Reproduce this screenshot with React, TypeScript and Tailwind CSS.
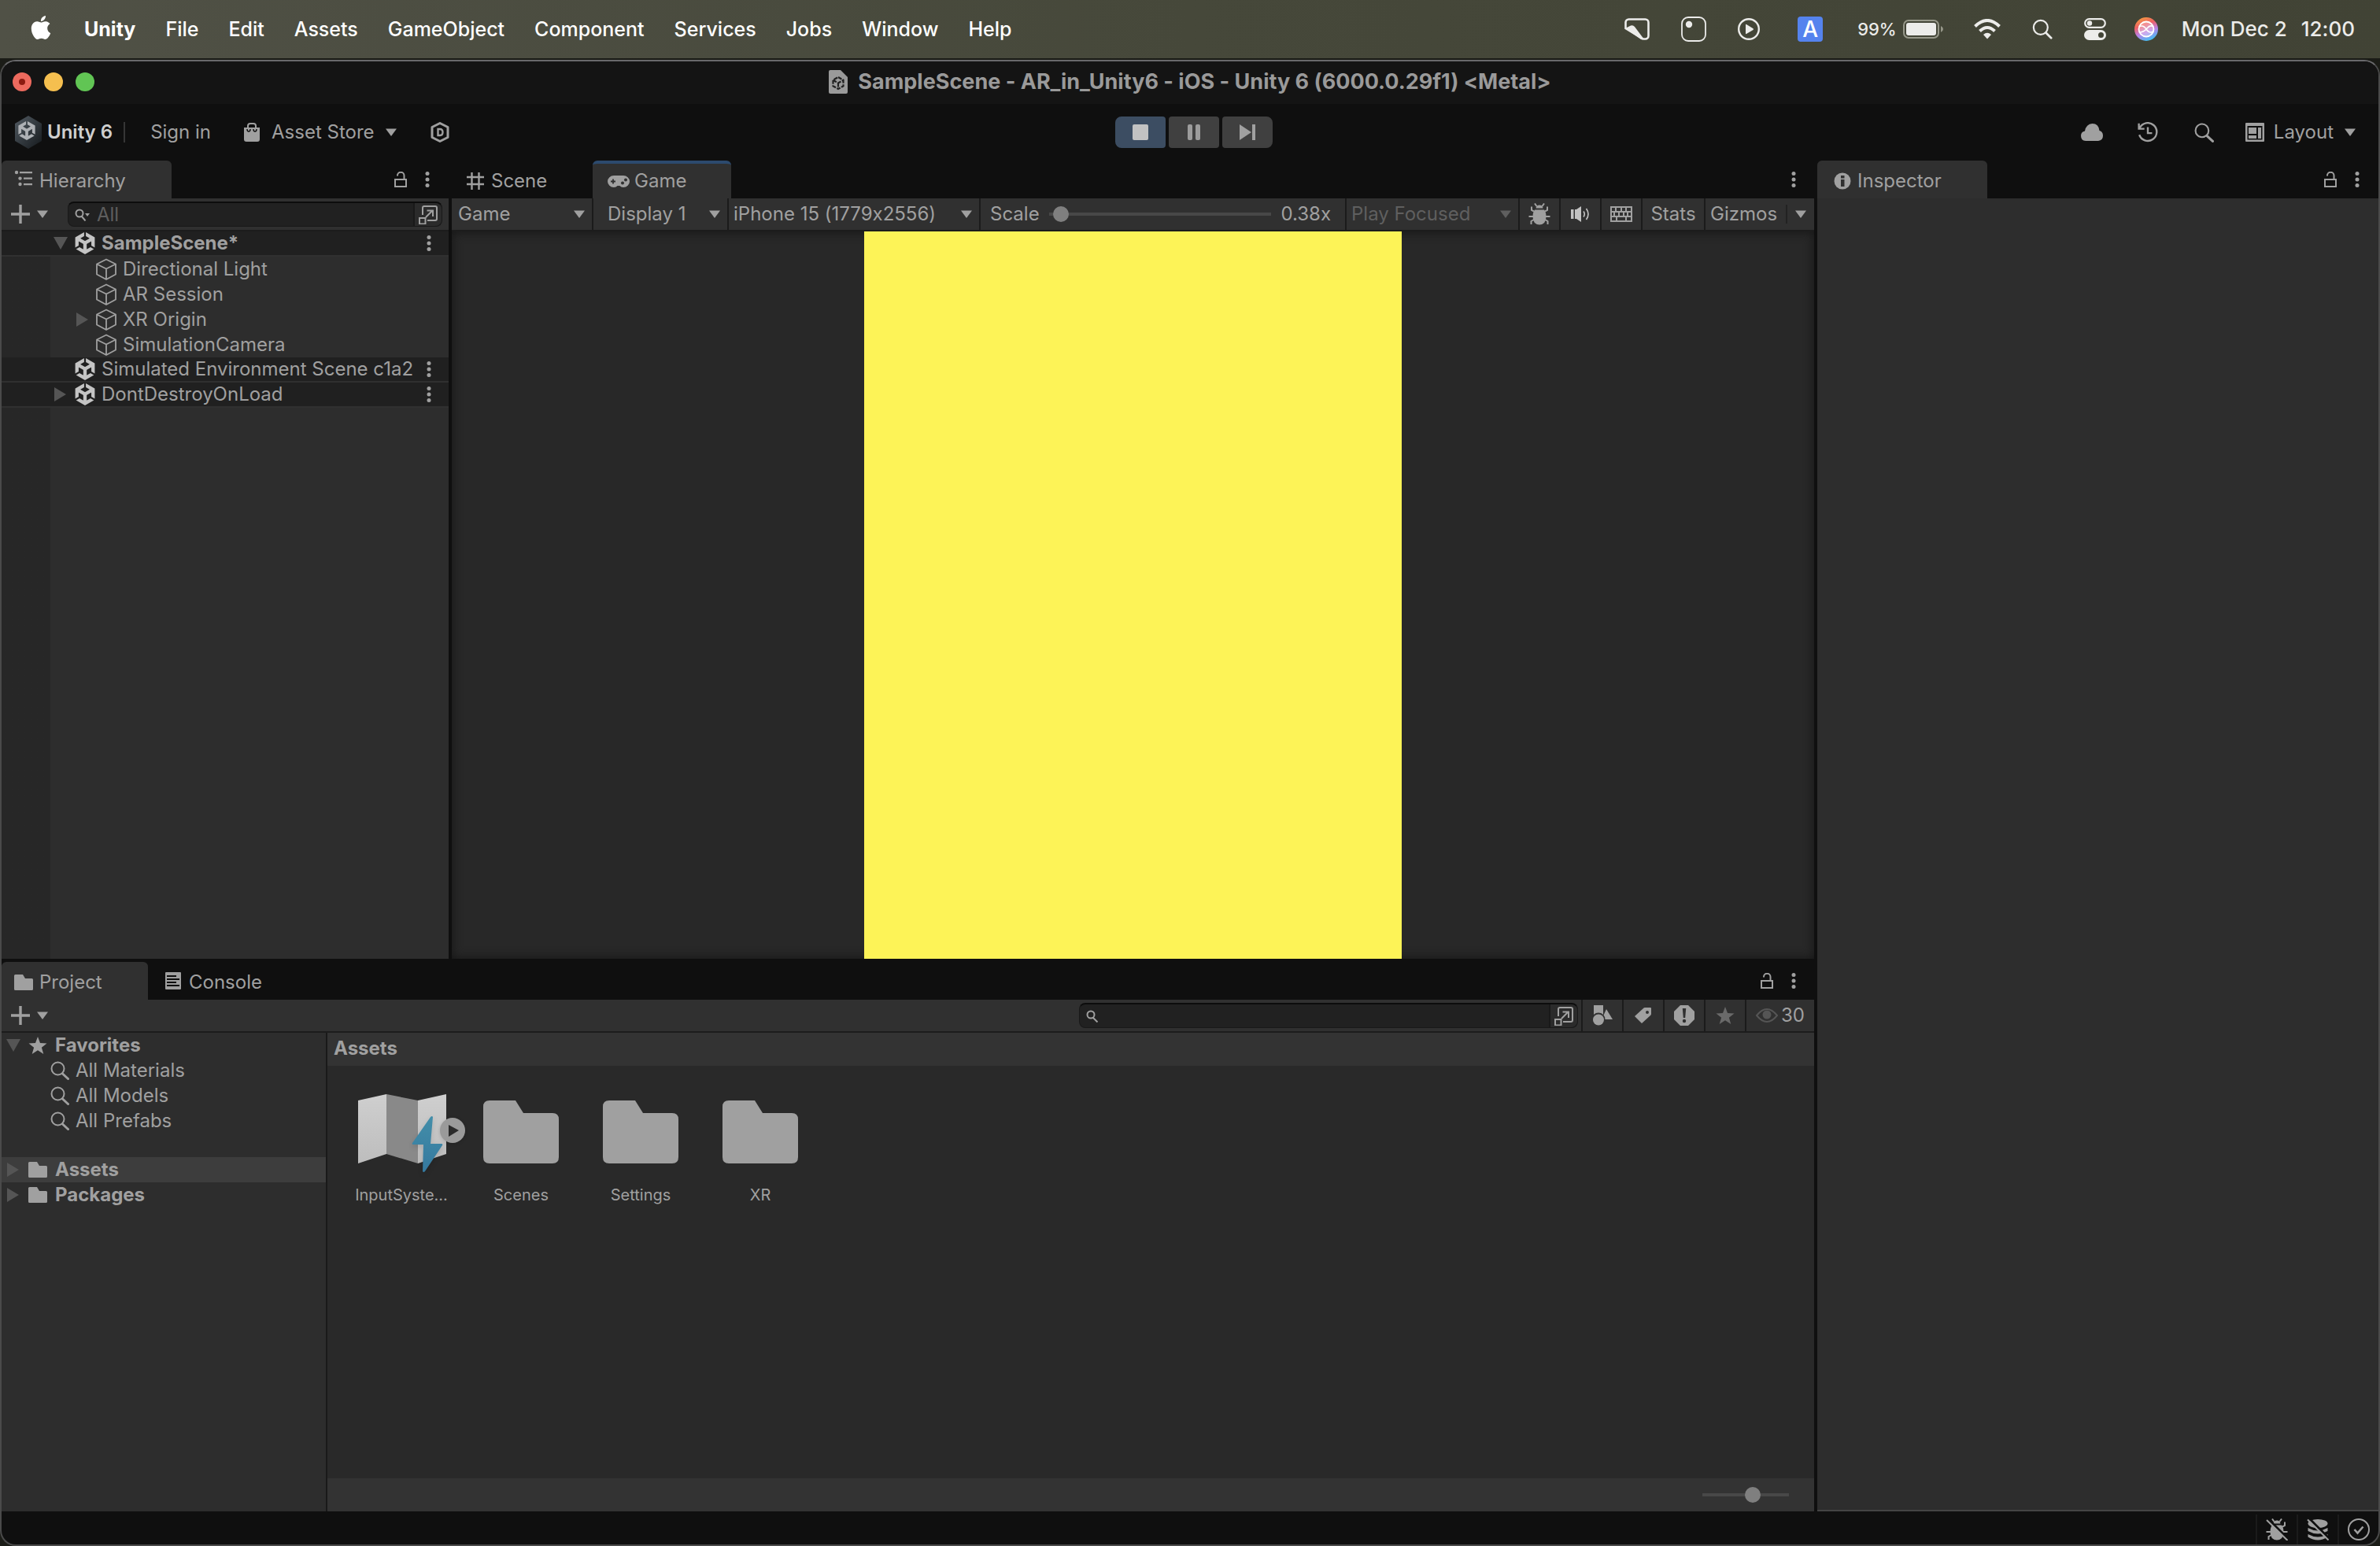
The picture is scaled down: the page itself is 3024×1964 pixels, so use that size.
import type { ReactNode } from 'react';

import clsx from 'clsx';
import { SiApple, SiUnity } from 'react-icons/si';

interface IconProps {
    className?: string;
    box?: string;
    children: ReactNode;
}

// Shared wrapper for the small editor glyphs
function Icon({ className, box = '0 0 24 24', children }: IconProps) {
    return (
        <svg viewBox={box} fill="currentColor" aria-hidden="true" className={clsx('block shrink-0', className)}>
            {children}
        </svg>
    );
}

function Caret({ className = 'w-4 h-3' }: { className?: string }) {
    return (
        <Icon box="0 0 16 12" className={className}>
            <path d="M1 1.500h14L8 11z" />
        </Icon>
    );
}

function Foldout({ open = false, className }: { open?: boolean; className?: string }) {
    return (
        <Icon box="0 0 18 18" className={clsx('w-[18px] h-[18px] text-[#555]', className)}>
            {open ? <path d="M0 1h18L9 17z" /> : <path d="M1 0v18l15-9z" />}
        </Icon>
    );
}

function LockIcon() {
    return (
        <Icon box="0 0 18 20" className="w-[18px] h-5">
            <path d="M5 5.500V5a4 4 0 0 1 8.500 0v5" fill="none" stroke="currentColor" strokeWidth="2" />
            <path d="M1 9h16v11H1zM3 11v7h12v-7z" fillRule="evenodd" />
        </Icon>
    );
}

function Kebab() {
    return (
        <Icon box="0 0 6 20" className="w-1.5 h-5">
            <circle cx="3" cy="2.500" r="2.500" />
            <circle cx="3" cy="10" r="2.500" />
            <circle cx="3" cy="17.500" r="2.500" />
        </Icon>
    );
}

function PlusCaret() {
    return (
        <button className="flex items-center gap-2" aria-label="Create">
            <Icon className="size-6">
                <path d="M10.300 0h3.400v10.300H24v3.400H13.700V24h-3.400V13.700H0v-3.400h10.300z" />
            </Icon>
            <Caret />
        </button>
    );
}

function SearchIcon({ className = 'size-6' }: { className?: string }) {
    return (
        <Icon className={className}>
            <g fill="none" stroke="currentColor" strokeLinecap="round">
                <circle cx="9.500" cy="9.500" r="8" strokeWidth="2" />
                <path d="M15.500 16l7 6.500" strokeWidth="3" />
            </g>
        </Icon>
    );
}

function PopoutIcon() {
    return (
        <Icon className="size-6">
            <g fill="none" stroke="currentColor" strokeWidth="2">
                <path d="M5 12V3a2 2 0 0 1 2-2h14a2 2 0 0 1 2 2v14a2 2 0 0 1-2 2H11" />
                <path d="M1 16h7.500v7.500H1zM9 15l8-8M10.500 6.500H18V14" />
            </g>
        </Icon>
    );
}

function FolderIcon({ className = 'size-6' }: { className?: string }) {
    return (
        <Icon className={className}>
            <path d="M1.500 2H11l3 5h8.500q1.500 0 1.500 1.500v12q0 1.500-1.500 1.500h-21Q0 22 0 20.500v-17Q0 2 1.500 2z" />
        </Icon>
    );
}

function StarIcon({ className = 'size-6' }: { className?: string }) {
    return (
        <Icon className={className}>
            <path d="M12 1l3 8 8.500.4-6.600 5.300L19.300 23 12 18.200 4.700 23l2.400-8.300L.5 9.400 9 9z" />
        </Icon>
    );
}

function CubeIcon() {
    return (
        <Icon box="0 0 26 28" className="w-[26px] h-7">
            <path d="M13 1.500l12 6v13l-12 6.500-12-6.500v-13zM1 7.500l12 6 12-6M13 13.500V27" fill="none" stroke="currentColor" strokeWidth="1.800" strokeLinejoin="round" />
        </Icon>
    );
}

function BugIcon() {
    return (
        <Icon box="0 0 28 28" className="size-7">
            <path d="M9.500 6.500Q10 2.500 14 2.500t4.500 4zM8 8.500h12q2.500 3 2.500 8.500 0 10-8.500 10.500Q5.500 27 5.500 17q0-5.500 2.500-8.500z" />
            <path d="M10.500 4L8 .5M17.500 4L20 .5M7 10.500L4 9V4.500M21 10.500L24 9V4.500M6 17H.5M22 17h5.500M7 21l-3.500 2v4M21 21l3.500 2v4" fill="none" stroke="currentColor" strokeWidth="2" />
        </Icon>
    );
}

const menuItems = ['File', 'Edit', 'Assets', 'GameObject', 'Component', 'Services', 'Jobs', 'Window', 'Help'];

function MenuBar() {
    return (
        <header className="flex h-[74px] shrink-0 items-center bg-linear-to-r from-[#505146] via-[#46483a] to-[#414335] pl-[39px] pr-8 text-[25px] font-medium text-white">
            <SiApple className="mb-1 size-[30px] -ml-0.5" />
            <nav className="ml-10 flex items-center gap-[38px]">
                <button className="font-bold">Unity</button>
                {menuItems.map(item => (
                    <button key={item}>{item}</button>
                ))}
            </nav>
            <div className="ml-auto flex items-center text-[#ececea]">
                <Icon box="0 0 32 28" className="w-8 h-7">
                    <path d="M1.500 13V5.500a4 4 0 0 1 4-4h21a4 4 0 0 1 4 4v17a4 4 0 0 1-4 4h-2q-2 0-3.500-1.500L1.500 13z" fill="none" stroke="currentColor" strokeWidth="2.600" />
                    <path d="M1 13l7-3.500q3-1 5 1.500L25 27h-4z" />
                </Icon>
                <Icon box="0 0 32 32" className="ml-10 size-8">
                    <rect x="1" y="1" width="30" height="30" rx="8" fill="none" stroke="currentColor" strokeWidth="1.800" />
                    <circle cx="10" cy="10" r="4.200" />
                </Icon>
                <Icon box="0 0 28 28" className="ml-10 size-7">
                    <circle cx="14" cy="14" r="12.800" fill="none" stroke="currentColor" strokeWidth="2.400" />
                    <path d="M10 8.500v11q0 1 1 .5l8.500-5q1-1 0-1.800L11 8q-1-.5-1 .5z" />
                </Icon>
                <span className="ml-12 flex size-8 items-center justify-center rounded bg-[#5583ee] text-[28px] leading-8 text-white">A</span>
                <span className="ml-11 text-[22px]">99%</span>
                <Icon box="0 0 52 24" className="ml-2 w-[52px] h-6">
                    <rect x="1" y="1" width="44" height="22" rx="6" fill="none" stroke="#969789" strokeWidth="2" />
                    <rect x="4" y="4" width="38" height="16" rx="3" />
                    <path d="M48 8q3 1.500 3 4t-3 4z" fill="#969789" />
                </Icon>
                <Icon box="0 0 34 26" className="ml-[38px] w-[34px] h-[26px]">
                    <g fill="none" stroke="currentColor" strokeWidth="4">
                        <path d="M1.500 9.500q15.500-15 31 0" />
                        <path d="M7.500 15.500q9.500-9 19 0" />
                    </g>
                    <path d="M12 20q5-4.500 10 0l-5 5.500z" />
                </Icon>
                <Icon className="ml-10 size-[26px]">
                    <g fill="none" stroke="currentColor" strokeLinecap="round">
                        <circle cx="10" cy="10" r="8.300" strokeWidth="2" />
                        <path d="M16.300 16.300l6 6" strokeWidth="2.600" />
                    </g>
                </Icon>
                <Icon box="0 0 28 28" className="ml-10 size-7">
                    <rect x="1.200" y="1.200" width="25.600" height="10.600" rx="5.300" fill="none" stroke="currentColor" strokeWidth="2.200" />
                    <circle cx="7" cy="6.500" r="3.200" />
                    <path d="M6.500 15h15a6.500 6.500 0 0 1 0 13h-15a6.500 6.500 0 0 1 0-13zm15 3a3.500 3.500 0 1 0 0 7 3.500 3.500 0 0 0 0-7z" fillRule="evenodd" />
                </Icon>
                <Icon box="0 0 30 30" className="ml-9 size-[30px]">
                    <defs>
                        <linearGradient id="assistant" x1="0.200" y1="0" x2="0.600" y2="1">
                            <stop offset="0" stopColor="#f6a13c" />
                            <stop offset=".35" stopColor="#ee6066" />
                            <stop offset=".65" stopColor="#b982e8" />
                            <stop offset="1" stopColor="#3fc0f2" />
                        </linearGradient>
                    </defs>
                    <circle cx="15" cy="15" r="15" fill="url(#assistant)" />
                    <circle cx="15" cy="15" r="9.500" fill="#fff" fillOpacity=".3" stroke="#fff" strokeWidth="1.800" />
                    <path d="M6 12q5-3 9 3t9 3M6 19q6 0 10-5t8-2" fill="none" stroke="#fff" strokeWidth="1.600" />
                </Icon>
                <time className="ml-[30px] flex gap-[18px] text-[26px]">
                    <span>Mon Dec 2</span>
                    <span>12:00</span>
                </time>
            </div>
        </header>
    );
}

function TitleBar() {
    return (
        <div className="grid h-[54px] shrink-0 grid-cols-[1fr_auto_1fr] items-center bg-[#141414] pb-0.5">
            <div className="flex gap-4 pl-3.5">
                <button aria-label="Close" className="flex size-6 items-center justify-center rounded-full bg-[#ed6a5e]">
                    <span className="size-2 rounded-full bg-[#8c1a10]" />
                </button>
                <button aria-label="Minimize" className="size-6 rounded-full bg-[#f5bf4f]" />
                <button aria-label="Zoom" className="size-6 rounded-full bg-[#61c554]" />
            </div>
            <h1 className="flex items-center gap-[13px] text-[27px] font-bold text-[#9a9a9a]">
                <Icon box="0 0 24 30" className="w-6 h-[30px]">
                    <path d="M2 0h13l9 9v19q0 2-2 2H2q-2 0-2-2V2q0-2 2-2z" />
                    <path d="M12 9l6.500 3.700v7.600L12 24l-6.500-3.700v-7.600zM12 16.500V24M5.500 12.700l6.500 3.800 6.500-3.800" fill="none" stroke="#222" strokeWidth="2.200" strokeDasharray="5 1.500" />
                </Icon>
                SampleScene - AR_in_Unity6 - iOS - Unity 6 (6000.0.29f1) &lt;Metal&gt;
            </h1>
        </div>
    );
}

function MainToolbar() {
    return (
        <div className="grid h-[72px] shrink-0 grid-cols-[1fr_auto_1fr] items-center text-[#a0a0a0]">
            <div className="flex items-center pl-4">
                <Icon box="0 0 36 42" className="w-9 h-[42px]">
                    <defs>
                        <linearGradient id="badge" x1="0" y1="0" x2="1" y2="1">
                            <stop offset="0" stopColor="#525b63" />
                            <stop offset="1" stopColor="#15191c" />
                        </linearGradient>
                    </defs>
                    <path d="M18 0l17 10v22L18 42 1 32V10z" fill="url(#badge)" />
                    <g color="#aeb1b5">
                        <SiUnity x="4" y="7" width="28" height="28" />
                    </g>
                </Icon>
                <span className="ml-1.5 font-semibold text-[#cfcfcf]">Unity 6</span>
                <span className="ml-3.5 h-[26px] w-0.5 bg-[#363636]" />
                <button className="ml-8">Sign in</button>
                <button className="ml-[42px] flex items-center">
                    <Icon box="0 0 20 24" className="w-5 h-6">
                        <path d="M5 7V4q0-3 3-3h4q3 0 3 3v3" fill="none" stroke="currentColor" strokeWidth="2" />
                        <path d="M0 6h20v15q0 3-3 3H3q-3 0-3-3z" />
                        <path d="M4 8q0 3 2 3t2-3M12 8q0 3 2 3t2-3" fill="none" stroke="#111" strokeWidth="1.500" />
                    </Icon>
                    <span className="mr-[13px] ml-[15px]">Asset Store</span>
                    <Caret />
                </button>
                <button className="ml-[42px]" aria-label="DevOps">
                    <Icon box="0 0 24 26" className="w-6 h-[26px]">
                        <path d="M12 1.500l10 5v13l-10 5-10-5v-13z" fill="none" stroke="currentColor" strokeWidth="3" strokeLinejoin="round" />
                        <path d="M9.500 9v8H12q3.500 0 3.500-4T12 9z" fill="none" stroke="currentColor" strokeWidth="2.400" />
                    </Icon>
                </button>
            </div>
            <div className="ml-2.5 flex gap-1">
                <button aria-label="Stop" className="flex h-10 w-16 items-center justify-center rounded-l-lg rounded-r-sm bg-[#3c4d62]">
                    <span className="size-5 rounded-xs bg-[#c2c2c2]" />
                </button>
                <button aria-label="Pause" className="flex h-10 w-16 items-center justify-center gap-1 rounded-sm bg-[#404040]">
                    <span className="h-5 w-1.5 rounded-xs bg-[#9c9c9c]" />
                    <span className="h-5 w-1.5 rounded-xs bg-[#9c9c9c]" />
                </button>
                <button aria-label="Step" className="flex h-10 w-16 items-center justify-center rounded-l-sm rounded-r-lg bg-[#404040]">
                    <Icon box="0 0 22 20" className="w-[22px] h-5">
                        <path d="M1 0l15 10L1 20zM17 0h4v20h-4z" />
                    </Icon>
                </button>
            </div>
            <div className="flex items-center justify-end pr-7">
                <Icon box="0 0 28 22" className="w-7 h-[22px]">
                    <path d="M6 22q-6-.5-6-6.500 0-5 5-6 1.500-9 9.500-9.500 8 0 9 9 4.500 1 4.500 6.500T22 22z" />
                </Icon>
                <Icon className="ml-11 size-[26px]">
                    <g fill="none" stroke="currentColor" strokeWidth="2.200">
                        <path d="M2.500 7a10.500 10.500 0 1 1-.5 8M1.500 1.500V8H8" />
                        <path d="M12 6v7h5" />
                    </g>
                </Icon>
                <SearchIcon className="ml-[46px] size-[25px]" />
                <button className="ml-10 flex items-center">
                    <Icon className="size-6">
                        <path d="M1 0h22q1 0 1 1v22q0 1-1 1H1q-1 0-1-1V1q0-1 1-1zM2.500 4v17.500h19V4z" fillRule="evenodd" />
                        <path d="M4 6h10v8H4zM4 16h10v4H4zM16 6h4v14h-4z" />
                    </Icon>
                    <span className="mr-[13px] ml-3">Layout</span>
                    <Caret />
                </button>
            </div>
        </div>
    );
}

interface TabProps {
    label: string;
    icon: ReactNode;
    className: string;
    active?: boolean;
    focused?: boolean;
}

function Tab({ label, icon, className, active, focused }: TabProps) {
    return (
        <button
            role="tab"
            aria-selected={!!active}
            className={clsx(
                'flex h-12 shrink-0 items-center border-t-4',
                active ? 'rounded-t-md bg-[#303030]' : 'border-transparent',
                active && (focused ? 'border-[#2c4a6e]' : 'border-[#303030]'),
                className,
            )}
        >
            {icon}
            {label}
        </button>
    );
}

function TabActions({ lock = false, className }: { lock?: boolean; className: string }) {
    return (
        <div className={clsx('ml-auto flex items-center gap-[22px]', className)}>
            {lock && <button aria-label="Lock"><LockIcon /></button>}
            <button aria-label="More"><Kebab /></button>
        </div>
    );
}

interface RowProps {
    name: string;
    depth: 'scene' | 'object';
    foldout?: 'open' | 'closed';
    bold?: boolean;
}

const hierarchy: RowProps[] = [
    { name: 'SampleScene*', depth: 'scene', foldout: 'open', bold: true },
    { name: 'Directional Light', depth: 'object' },
    { name: 'AR Session', depth: 'object' },
    { name: 'XR Origin', depth: 'object', foldout: 'closed' },
    { name: 'SimulationCamera', depth: 'object' },
    { name: 'Simulated Environment Scene c1a2', depth: 'scene' },
    { name: 'DontDestroyOnLoad', depth: 'scene', foldout: 'closed' },
];

function HierarchyRow({ name, depth, foldout, bold }: RowProps) {
    const scene = depth === 'scene';
    return (
        <li
            className={clsx(
                'flex h-8 items-center whitespace-nowrap pr-[22px]',
                scene ? 'border-b-2 border-[#303030] bg-[#202020] pl-[66px]' : 'pl-[94px]',
            )}
        >
            <span className="mr-2 w-[18px] shrink-0">
                {foldout && <Foldout open={foldout === 'open'} />}
            </span>
            {scene ? <SiUnity className="size-7 shrink-0 text-[#c4c4c4]" /> : <CubeIcon />}
            <span className={clsx(scene ? 'ml-[7px]' : 'ml-2', bold && 'font-bold')}>{name}</span>
            {scene && <button aria-label="Scene menu" className="ml-auto"><Kebab /></button>}
        </li>
    );
}

function HierarchyPanel() {
    return (
        <section className="flex w-[568px] shrink-0 flex-col bg-[#2d2d2d]">
            <div className="flex bg-[#0f0f0f]">
                <Tab
                    label="Hierarchy"
                    active
                    className="w-[216px] gap-2 pl-4"
                    icon={
                        <Icon className="mb-1 size-6">
                            <path d="M7 2h16v2.200H7zM12 9.500h11v2.200H12zM12 17h11v2.200H12z" />
                            <circle cx="3" cy="3" r="2.200" />
                            <circle cx="7.500" cy="10.600" r="2.200" />
                            <circle cx="7.500" cy="18" r="2.200" />
                        </Icon>
                    }
                />
                <TabActions lock className="pr-6" />
            </div>
            <div className="flex h-[42px] items-center border-b-2 border-[#1c1c1c] bg-[#303030] pl-3 pr-2">
                <PlusCaret />
                <label className="ml-6 flex h-8 flex-1 items-center rounded-lg border border-t-2 border-[#191919] border-t-[#0c0c0c] bg-[#212121] pl-2">
                    <Icon box="0 0 20 16" className="w-5 h-4">
                        <circle cx="6" cy="6" r="4.500" fill="none" stroke="currentColor" strokeWidth="2" />
                        <path d="M8.500 9.500l5 6" stroke="currentColor" strokeWidth="2" />
                        <path d="M13 6h6l-3 4z" />
                    </Icon>
                    <input aria-label="Search hierarchy" placeholder="All" className="ml-2 min-w-0 flex-1 outline-none placeholder:text-[#5e5e5e]" />
                    <span className="flex h-full w-9 items-center justify-center rounded-r-lg border-l-2 border-[#191919] bg-[#2b2b2b]">
                        <PopoutIcon />
                    </span>
                </label>
            </div>
            <ul className="flex-1 bg-linear-to-r from-[#272727] from-[62px] to-[#2d2d2d] to-[62px]">
                {hierarchy.map(row => (
                    <HierarchyRow key={row.name} {...row} />
                ))}
            </ul>
        </section>
    );
}

function ToolbarSelect({ label, value, className }: { label: string; value: string; className: string }) {
    return (
        <div className={clsx('grid shrink-0 items-center border-r-2 border-[#1b1b1b] pr-2', className)}>
            <select aria-label={label} className="col-start-1 row-start-1 h-full appearance-none outline-none">
                <option>{value}</option>
            </select>
            <Caret className="pointer-events-none col-start-1 row-start-1 h-3 w-4 justify-self-end" />
        </div>
    );
}

function ToolbarButton({ label, children, className }: { label: string; children: ReactNode; className?: string }) {
    return (
        <button aria-label={label} className={clsx('flex w-[52px] shrink-0 items-center justify-center border-r-2 border-[#1b1b1b]', className)}>
            {children}
        </button>
    );
}

const sliderStyle = [
    'h-5 appearance-none bg-transparent',
    '[&::-webkit-slider-runnable-track]:h-1 [&::-webkit-slider-runnable-track]:bg-[#484848]',
    '[&::-webkit-slider-thumb]:-mt-2 [&::-webkit-slider-thumb]:size-5 [&::-webkit-slider-thumb]:appearance-none',
    '[&::-webkit-slider-thumb]:rounded-full [&::-webkit-slider-thumb]:bg-[#7f7f7f]',
].join(' ');

function GamePanel() {
    return (
        <section className="flex min-w-0 flex-1 flex-col">
            <div className="flex bg-[#0f0f0f]">
                <Tab
                    label="Scene"
                    className="w-[179px] gap-2 pl-[18px]"
                    icon={
                        <Icon className="size-6">
                            <path d="M7.500 1v22M16.500 1v22M1 7h22M1 16h22" fill="none" stroke="currentColor" strokeWidth="2.400" />
                        </Icon>
                    }
                />
                <Tab
                    label="Game"
                    active
                    focused
                    className="w-[176px] gap-1.5 pl-[19px]"
                    icon={
                        <Icon box="0 0 28 16" className="w-7 h-4">
                            <path d="M8 1h12a8 7.500 0 0 1 0 15q-3 0-4.500-2h-3Q11 16 8 16A8 7.500 0 0 1 8 1z" />
                            <path d="M4 8.500h6M7 5.500v6" stroke="#303030" strokeWidth="1.800" />
                            <circle cx="19" cy="10.500" r="2" fill="#303030" />
                            <circle cx="23" cy="6.500" r="2" fill="#303030" />
                        </Icon>
                    }
                />
                <TabActions className="pr-[23px]" />
            </div>
            <div className="flex h-[42px] border-b-2 border-[#1c1c1c] bg-[#303030]">
                <ToolbarSelect label="View" value="Game" className="w-[180px] pl-2" />
                <ToolbarSelect label="Display" value="Display 1" className="w-[172px] pl-[18px]" />
                <ToolbarSelect label="Resolution" value="iPhone 15 (1779x2556)" className="w-80 pl-1.5" />
                <div className="flex flex-1 items-center border-r-2 border-[#1b1b1b] pl-3 pr-[18px]">
                    <label htmlFor="scale">Scale</label>
                    <input id="scale" type="range" min={0} max={100} defaultValue={2} className={clsx('mx-3 min-w-0 flex-1', sliderStyle)} />
                    <output htmlFor="scale">0.38x</output>
                </div>
                <ToolbarSelect label="Play mode" value="Play Focused" className="w-[220px] pl-1.5 text-[#5f5f5f]" />
                <ToolbarButton label="Debug">
                    <BugIcon />
                </ToolbarButton>
                <ToolbarButton label="Mute audio">
                    <Icon className="size-6 text-[#c2c2c2]">
                        <path d="M0 6h3.500v12H0zM5 6h2l6-4v20l-6-4H5z" />
                        <path d="M16 8.500q2.500 3.500 0 7M19.500 5q5 7 0 14" fill="none" stroke="currentColor" strokeWidth="1.600" />
                    </Icon>
                </ToolbarButton>
                <ToolbarButton label="Shortcuts">
                    <Icon box="0 0 28 20" className="w-7 h-5">
                        <path d="M1 1h26v18H1zM1 7h26M1 13h26M7 1v6M14 1v6M20 1v6M5 7v6M11 7v6M17 7v6M22 7v6M8 13v6M20 13v6" fill="none" stroke="currentColor" strokeWidth="2" />
                    </Icon>
                </ToolbarButton>
                <button className="w-20 shrink-0 border-r-2 border-[#1b1b1b]">Stats</button>
                <button className="w-[102px] shrink-0 pl-1.5 text-left">Gizmos</button>
                <button aria-label="Gizmo options" className="my-2 flex w-9 shrink-0 items-center justify-center border-l-2 border-[#222]">
                    <Caret />
                </button>
            </div>
            <div className="flex min-h-0 flex-1 justify-center bg-[#282828] shadow-[inset_0_0_14px_#151515]">
                <div className="aspect-[683/924] h-full bg-[#fdf357]" />
            </div>
        </section>
    );
}

const favorites = ['All Materials', 'All Models', 'All Prefabs'];
const folders = ['Scenes', 'Settings', 'XR'];

function ActionsAssetIcon() {
    return (
        <Icon box="0 0 152 106" className="h-[106px] w-[152px] overflow-visible">
            <defs>
                <linearGradient id="page" x1="0" y1="0" x2="0" y2="1">
                    <stop offset="0" stopColor="#cfcfcf" />
                    <stop offset="1" stopColor="#bdbdbd" />
                </linearGradient>
                <linearGradient id="bolt" x1="0" y1="0" x2="0" y2="1">
                    <stop offset="0" stopColor="#438ea9" />
                    <stop offset="1" stopColor="#35799f" />
                </linearGradient>
            </defs>
            <path d="M21 12l36-8v76l-36 12z" fill="url(#page)" />
            <path d="M57 4l40 8v80L57 80z" fill="#898989" />
            <path d="M97 12l36-8v76L97 92z" fill="url(#page)" />
            <path d="M113 33q2-2 3 0l-3 34h14q2 0 1 2l-22 33q-2 2-3 0l1-34H91q-2 0-1-2z" fill="url(#bolt)" className="drop-shadow-md" />
            <circle cx="141" cy="50" r="16" fill="#9a9a9a" className="drop-shadow-sm" />
            <path d="M136 43l13 7-13 8z" fill="#2a2a2a" />
        </Icon>
    );
}

function AssetTile({ name, children }: { name: string; children: ReactNode }) {
    return (
        <li className="flex w-[152px] flex-col items-center">
            {children}
            <span className="mt-3 text-[20px] leading-7">{name}</span>
        </li>
    );
}

function ProjectPanel() {
    return (
        <section className="flex min-h-0 flex-[698_1_0%] flex-col">
            <div className="flex bg-[#0f0f0f]">
                <Tab label="Project" active className="w-[186px] gap-2 pl-4" icon={<FolderIcon />} />
                <Tab
                    label="Console"
                    className="gap-2.5 pl-[22px]"
                    icon={
                        <Icon box="0 0 20 22" className="mb-1 w-5 h-[22px]">
                            <path d="M1 0h18q1 0 1 1v20q0 1-1 1H1q-1 0-1-1V1q0-1 1-1zM2 4v2h12V4zm0 4v2h16V8zm0 4v2h12v-2zm0 4v2h16v-2z" fillRule="evenodd" />
                        </Icon>
                    }
                />
                <TabActions lock className="pr-[23px]" />
            </div>
            <div className="flex h-[42px] items-center border-b-2 border-[#1c1c1c] bg-[#303030] pl-3">
                <PlusCaret />
                <label className="ml-auto mr-1 flex h-8 w-[634px] items-center rounded-lg border border-t-2 border-[#191919] border-t-[#0c0c0c] bg-[#212121] pl-2">
                    <Icon box="0 0 16 16" className="size-4">
                        <circle cx="6" cy="6" r="4.500" fill="none" stroke="currentColor" strokeWidth="2" />
                        <path d="M8.500 9.500l6 6" stroke="currentColor" strokeWidth="2" />
                    </Icon>
                    <input aria-label="Search project" className="ml-2 min-w-0 flex-1 outline-none" />
                    <span className="flex h-full w-9 items-center justify-center rounded-r-lg border-l-2 border-[#191919] bg-[#2b2b2b]">
                        <PopoutIcon />
                    </span>
                </label>
                <div className="flex h-full border-l-2 border-[#1b1b1b]">
                    <ToolbarButton label="Search by type">
                        <Icon box="0 0 26 26" className="size-[26px]">
                            <path d="M2 0h12v12H2z" />
                            <path d="M18 5l8 13H12z" />
                            <circle cx="8" cy="18" r="8.500" fill="#303030" />
                            <circle cx="8" cy="18.500" r="7" />
                        </Icon>
                    </ToolbarButton>
                    <ToolbarButton label="Search by label">
                        <Icon box="0 0 22 20" className="w-[22px] h-5">
                            <path d="M11 1q.8-1 2-1h7q1 0 1 1v7q0 1-1 2L9 20 0 11zM16 4a2 2 0 1 0 0 4 2 2 0 0 0 0-4z" fillRule="evenodd" />
                        </Icon>
                    </ToolbarButton>
                    <ToolbarButton label="Search by import log">
                        <Icon box="0 0 26 26" className="size-[26px]">
                            <path d="M8 0h10l8 8v10l-8 8H8l-8-8V8z" />
                            <path d="M10.800 4h4.400l-1 12h-2.400z" fill="#303030" />
                            <circle cx="13" cy="20" r="2.200" fill="#303030" />
                        </Icon>
                    </ToolbarButton>
                    <ToolbarButton label="Save search" className="text-[#6a6a6a]">
                        <StarIcon />
                    </ToolbarButton>
                    <button aria-label="Hidden packages" className="flex w-[86px] items-center gap-1 pl-3">
                        <Icon box="0 0 28 18" className="h-[18px] w-7 text-[#555]">
                            <path d="M1 9q13-16 26 0-13 16-26 0z" fill="none" stroke="currentColor" strokeWidth="2" />
                            <circle cx="14" cy="8" r="5.500" />
                        </Icon>
                        30
                    </button>
                </div>
            </div>
            <div className="flex min-h-0 flex-1">
                <nav className="w-[414px] shrink-0 border-r-2 border-[#191919] bg-[#2d2d2d]">
                    <div className="flex h-8 items-center pl-1.5 font-bold">
                        <Foldout open />
                        <StarIcon className="mx-2.5 size-6" />
                        Favorites
                    </div>
                    <ul className="mb-[30px]">
                        {favorites.map(name => (
                            <li key={name} className="flex h-8 items-center gap-2 pl-[62px]">
                                <SearchIcon />
                                {name}
                            </li>
                        ))}
                    </ul>
                    <div className="flex h-8 items-center bg-[#3d3d3d] pl-1.5 font-bold">
                        <Foldout />
                        <FolderIcon className="mx-2.5 size-6" />
                        Assets
                    </div>
                    <div className="flex h-8 items-center pl-1.5 font-bold">
                        <Foldout />
                        <FolderIcon className="mx-2.5 size-6" />
                        Packages
                    </div>
                </nav>
                <div className="flex min-w-0 flex-1 flex-col bg-[#292929]">
                    <h2 className="h-[42px] bg-[#333] pl-2 text-[24px] leading-10 font-bold">Assets</h2>
                    <ul className="flex flex-1 pt-8 pl-[18px]">
                        <AssetTile name="InputSyste...">
                            <ActionsAssetIcon />
                        </AssetTile>
                        {folders.map(name => (
                            <AssetTile key={name} name={name}>
                                <Icon box="0 0 96 106" className="h-[106px] w-24">
                                    <path d="M8 12h33l10 16h37q8 0 8 8v48q0 8-8 8H8q-8 0-8-8V20q0-8 8-8z" />
                                </Icon>
                            </AssetTile>
                        ))}
                    </ul>
                    <div className="flex h-[42px] items-center justify-end bg-[#333] pr-8">
                        <input aria-label="Icon size" type="range" min={0} max={100} defaultValue={60} className={clsx('w-[110px]', sliderStyle)} />
                    </div>
                </div>
            </div>
        </section>
    );
}

function InspectorPanel() {
    return (
        <section className="flex w-[713px] shrink-0 flex-col border-b-2 border-[#444] bg-[#2d2d2d]">
            <div className="flex bg-[#0f0f0f]">
                <Tab
                    label="Inspector"
                    active
                    className="w-[216px] gap-2 pl-[21px]"
                    icon={
                        <Icon box="0 0 22 22" className="size-[22px]">
                            <circle cx="11" cy="11" r="10.500" />
                            <path d="M9 9h4.500v9H9zM9 4h4.500v3.500H9z" fill="#303030" />
                        </Icon>
                    }
                />
                <TabActions lock className="pr-6" />
            </div>
        </section>
    );
}

function StatusBar() {
    return (
        <footer className="flex h-[42px] shrink-0 justify-end pt-1 text-[#a0a0a0]">
            <button aria-label="Debug mode" className="flex w-[52px] items-center justify-center border-l-2 border-[#1b1b1b]">
                <Icon box="0 0 28 28" className="size-7">
                    <path d="M9.500 6.500Q10 2.500 14 2.500t4.500 4zM8 8.500h12q2.500 3 2.500 8.500 0 10-8.500 10.500Q5.500 27 5.500 17q0-5.500 2.500-8.500z" />
                    <path d="M10.500 4L8 .5M17.500 4L20 .5M21 10.500L24 9V4.500M6 17H.5M22 17h5.500M7 21l-3.500 2v4" fill="none" stroke="currentColor" strokeWidth="2" />
                    <path d="M3 1l25 24.500" stroke="#0f0f0f" strokeWidth="3" />
                    <path d="M1 2l26.500 26" stroke="currentColor" strokeWidth="2" />
                </Icon>
            </button>
            <button aria-label="Cache server" className="flex w-[52px] items-center justify-center border-l-2 border-[#1b1b1b]">
                <Icon box="0 0 28 28" className="size-7">
                    <ellipse cx="14" cy="6.500" rx="12.500" ry="5.500" />
                    <path d="M1.500 12q12.500 7 25 0v4q-12.500 7-25 0zM1.500 20q12.500 7 25 0v3.500q-12.500 8-25 0z" />
                    <path d="M3 0l25 25" stroke="#0f0f0f" strokeWidth="3" />
                    <path d="M1 1.500l26.500 26" stroke="currentColor" strokeWidth="2" />
                </Icon>
            </button>
            <button aria-label="Background tasks" className="flex w-[52px] items-center justify-center border-l-2 border-[#1b1b1b]">
                <Icon box="0 0 28 28" className="size-7">
                    <circle cx="14" cy="14" r="13" fill="none" stroke="currentColor" strokeWidth="2" />
                    <path d="M8.500 14l4 4.500 7-8" fill="none" stroke="currentColor" strokeWidth="2.600" />
                </Icon>
            </button>
        </footer>
    );
}

export default function App() {
    return (
        <div className="flex h-screen flex-col bg-[#1b1c17] font-['Inter','Liberation_Sans',sans-serif] text-[24px] leading-8 [font-feature-settings:'calt'_0]">
            <MenuBar />
            <main className="mt-0.5 flex min-h-0 flex-1 flex-col overflow-hidden rounded-[20px] border-2 border-[#4a4a4a] border-t-[#69696b] bg-[#0f0f0f]">
                <TitleBar />
                <MainToolbar />
                <div className="flex min-h-0 flex-1 gap-1 text-[#a0a0a0]">
                    <div className="flex min-w-0 flex-1 flex-col gap-1">
                        <div className="flex min-h-0 flex-[1014_1_0%] gap-1">
                            <HierarchyPanel />
                            <GamePanel />
                        </div>
                        <ProjectPanel />
                    </div>
                    <InspectorPanel />
                </div>
                <StatusBar />
            </main>
        </div>
    );
}
